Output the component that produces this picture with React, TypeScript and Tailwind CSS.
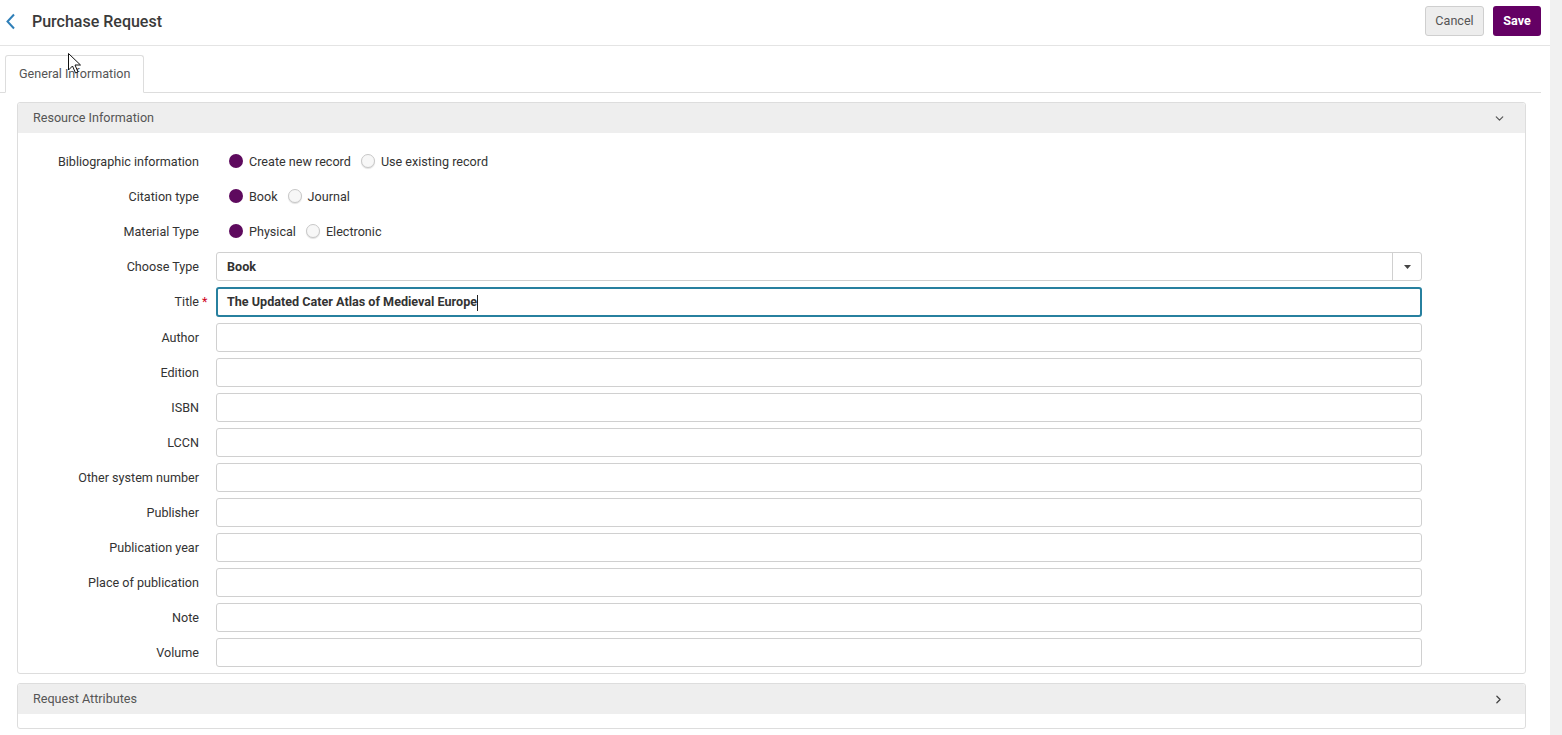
import { ChevronDown, ChevronRight } from 'lucide-react';

const FIELDS = [
  'Author',
  'Edition',
  'ISBN',
  'LCCN',
  'Other system number',
  'Publisher',
  'Publication year',
  'Place of publication',
  'Note',
  'Volume',
];

function Radio({ checked, label }: { checked?: boolean; label: string }) {
  return (
    <label className="flex items-center gap-[6px] mr-[10px]">
      {checked ? (
        <span className="w-[14px] h-[14px] rounded-full bg-[#5e0a5e]" />
      ) : (
        <span className="w-[14px] h-[14px] rounded-full border border-[#c8c8c8] bg-[#f7f7f7] shadow-[0_1px_1px_rgba(0,0,0,0.12)]" />
      )}
      <span className="pt-px">{label}</span>
    </label>
  );
}

function Row({ label, required, tall, children }: { label: string; required?: boolean; tall?: boolean; children: React.ReactNode }) {
  return (
    <div className={`flex items-center ${tall ? 'h-[30px]' : 'h-[29px]'}`}>
      <div className="w-[181px] shrink-0 text-right relative pt-px">
        {label}
        {required && <span className="absolute left-full ml-[3px] text-[#d0021b]">*</span>}
      </div>
      <div className="ml-[17px] w-[1206px] h-full flex items-center">{children}</div>
    </div>
  );
}

export default function App() {
  return (
    <div className="relative flex w-[1562px] min-h-[735px] bg-white text-[12.6px] text-[#333] font-['Roboto','Liberation_Sans',sans-serif]">
      <div className="w-[1550px]">
        {/* header */}
        <div className="h-[46px] border-b border-[#e4e4e4] flex items-center pl-[5px] pr-[9px]">
          <svg width="11" height="17" viewBox="0 0 11 17" className="mb-[2px]">
            <polyline points="9,1.5 2.5,8.5 9,15.5" fill="none" stroke="#2f7fb8" strokeWidth="2" />
          </svg>
          <h1 className="ml-[16px] text-[16px] font-medium text-[#3a3a3a] mb-[2px]">Purchase Request</h1>
          <div className="ml-auto flex gap-[9px] mt-[-3px]">
            <button className="h-[30px] w-[59px] rounded-[3px] border border-[#cfcfcf] bg-[#ededed] text-[#555]">Cancel</button>
            <button className="h-[30px] w-[48px] rounded-[3px] bg-[#640064] text-white font-bold">Save</button>
          </div>
        </div>

        {/* tabs */}
        <div className="mt-[9px] mr-[9px] border-b border-[#ddd] pl-[5px] flex">
          <div className="h-[38px] w-[139px] -mb-px border border-[#ddd] border-b-white rounded-t-[3px] bg-white flex items-center pl-[13px] text-[#555]">
            General Information
          </div>
        </div>

        {/* resource information */}
        <div className="mt-[9px] ml-[17px] w-[1509px] border border-[#ddd] rounded-[3px]">
          <div className="h-[30px] bg-[#eeeeee] flex items-center pl-[15px] pr-[19px] text-[#555] rounded-t-[3px]">
            Resource Information
            <ChevronDown size={13} strokeWidth={2.2} className="ml-auto text-[#555]" />
          </div>
          <div className="pt-[14px] pb-[6px] flex flex-col gap-[6px]">
            <Row label="Bibliographic information">
              <div className="flex items-center pl-[13px]">
                <Radio checked label="Create new record" />
                <Radio label="Use existing record" />
              </div>
            </Row>
            <Row label="Citation type">
              <div className="flex items-center pl-[13px]">
                <Radio checked label="Book" />
                <Radio label="Journal" />
              </div>
            </Row>
            <Row label="Material Type">
              <div className="flex items-center pl-[13px]">
                <Radio checked label="Physical" />
                <Radio label="Electronic" />
              </div>
            </Row>
            <Row label="Choose Type">
              <div className="w-full h-full border border-[#d0d0d0] rounded-[3px] flex items-center">
                <span className="pl-[10px] pt-px font-bold flex-1">Book</span>
                <span className="w-[29px] h-full border-l border-[#d0d0d0] flex items-center justify-center">
                  <svg width="7" height="4" viewBox="0 0 7 4">
                    <polygon points="0,0 7,0 3.5,4" fill="#444" />
                  </svg>
                </span>
              </div>
            </Row>
            <Row label="Title" required tall>
              <div className="w-full h-full border-2 border-[#27809f] rounded-[3px] flex items-center pl-[9px] pt-px font-bold text-[#333]">
                The Updated Cater Atlas of Medieval Europe
                <span className="w-px h-[16px] bg-[#222]" />
              </div>
            </Row>
            {FIELDS.map((f) => (
              <Row key={f} label={f}>
                <div className="w-full h-full border border-[#d0d0d0] rounded-[3px]" />
              </Row>
            ))}
          </div>
        </div>

        {/* request attributes */}
        <div className="mt-[9px] ml-[17px] w-[1509px] h-[46px] border border-[#ddd] rounded-[3px]">
          <div className="h-[30px] bg-[#eeeeee] flex items-center pl-[15px] pr-[20px] text-[#555] rounded-t-[3px]">
            Request Attributes
            <ChevronRight size={13} strokeWidth={2.4} className="ml-auto text-[#444]" />
          </div>
        </div>
      </div>

      {/* scrollbar track */}
      <div className="w-[12px] bg-[#f1f1f1]" />

      {/* mouse pointer */}
      <svg width="14" height="22" viewBox="0 0 14 22" className="absolute left-[68px] top-[53px]">
        <path d="M0.5 0.5 L0.5 17 L4.5 13 L7.5 20 L10 19 L7 12 L12.5 12 Z" fill="white" stroke="#111" strokeWidth="1" />
      </svg>
    </div>
  );
}
